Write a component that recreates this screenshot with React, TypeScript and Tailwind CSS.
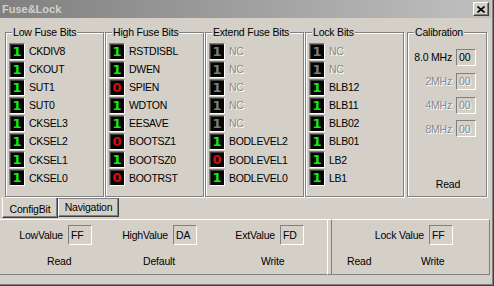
import React from "react";

type Bit = { v: 0 | 1; name: string; dis?: boolean };

const low: Bit[] = [
  { v: 1, name: "CKDIV8" },
  { v: 1, name: "CKOUT" },
  { v: 1, name: "SUT1" },
  { v: 1, name: "SUT0" },
  { v: 1, name: "CKSEL3" },
  { v: 1, name: "CKSEL2" },
  { v: 1, name: "CKSEL1" },
  { v: 1, name: "CKSEL0" },
];
const high: Bit[] = [
  { v: 1, name: "RSTDISBL" },
  { v: 1, name: "DWEN" },
  { v: 0, name: "SPIEN" },
  { v: 1, name: "WDTON" },
  { v: 1, name: "EESAVE" },
  { v: 0, name: "BOOTSZ1" },
  { v: 1, name: "BOOTSZ0" },
  { v: 0, name: "BOOTRST" },
];
const ext: Bit[] = [
  { v: 1, name: "NC", dis: true },
  { v: 1, name: "NC", dis: true },
  { v: 1, name: "NC", dis: true },
  { v: 1, name: "NC", dis: true },
  { v: 1, name: "NC", dis: true },
  { v: 1, name: "BODLEVEL2" },
  { v: 0, name: "BODLEVEL1" },
  { v: 1, name: "BODLEVEL0" },
];
const lock: Bit[] = [
  { v: 1, name: "NC", dis: true },
  { v: 1, name: "NC", dis: true },
  { v: 1, name: "BLB12" },
  { v: 1, name: "BLB11" },
  { v: 1, name: "BLB02" },
  { v: 1, name: "BLB01" },
  { v: 1, name: "LB2" },
  { v: 1, name: "LB1" },
];

function GroupBox({
  title,
  className,
  children,
}: {
  title: string;
  className: string;
  children: React.ReactNode;
}) {
  return (
    <div
      className={`relative border border-[#808080] shadow-[inset_1px_1px_0_#fff,1px_1px_0_#fff] ${className}`}
    >
      <span className="absolute left-[6px] top-[-8px] bg-[#d4d0c8] px-[1px] text-[10.5px] leading-[14px] tracking-[-0.2px] text-black whitespace-nowrap">
        {title}
      </span>
      {children}
    </div>
  );
}

function BitBox({ b }: { b: Bit }) {
  const color = b.dis ? "text-[#7c7c7c]" : b.v === 1 ? "text-[#10f010]" : "text-[#d01010]";
  return (
    <div className="w-[16px] h-[17px] shrink-0 border border-t-[#808080] border-l-[#808080] border-b-white border-r-white bg-[#050505] shadow-[inset_1px_1px_0_#404040] flex items-center justify-center">
      <span
        className={`${color} font-['DejaVu_Sans',sans-serif] font-bold text-[13px] leading-none`}
      >
        {b.v}
      </span>
    </div>
  );
}

function BitGroup({ title, bits }: { title: string; bits: Bit[] }) {
  return (
    <GroupBox title={title} className="w-[99px] h-[165px] shrink-0">
      <div className="flex flex-col pt-[9px] pl-[3px]">
        {bits.map((b, i) => (
          <div key={i} className="flex items-center h-[18.14px]">
            <BitBox b={b} />
            <span
              className={`ml-[4px] text-[10.5px] tracking-[-0.3px] leading-none whitespace-nowrap ${
                b.dis ? "text-[#8a8a8a] [text-shadow:1px_1px_0_#fff]" : "text-black"
              }`}
            >
              {b.name}
            </span>
          </div>
        ))}
      </div>
    </GroupBox>
  );
}

function TextBox({
  value,
  w,
  h,
  dis,
}: {
  value: string;
  w: string;
  h: string;
  dis?: boolean;
}) {
  return (
    <div
      className={`${w} ${h} shrink-0 border border-t-[#808080] border-l-[#808080] border-b-white border-r-white flex items-center pl-[2px] bg-[#d4d0c8]`}
    >
      <span
        className={`text-[10.5px] leading-none tracking-[-0.2px] ${
          dis ? "text-[#8a8a8a] [text-shadow:1px_1px_0_#fff]" : "text-black"
        }`}
      >
        {value}
      </span>
    </div>
  );
}

function CalRow({ label, dis }: { label: string; dis?: boolean }) {
  return (
    <div className="flex items-center h-[17px]">
      <span
        className={`w-[44px] text-right text-[10.5px] leading-none tracking-[-0.2px] whitespace-nowrap ${
          dis ? "text-[#8a8a8a] [text-shadow:1px_1px_0_#fff]" : "text-black"
        }`}
      >
        {label}
      </span>
      <div className="ml-[4px]">
        <TextBox value="00" w="w-[20px]" h="h-[17px]" dis={dis} />
      </div>
    </div>
  );
}

function ValueItem({ label, value, w }: { label: string; value: string; w: string }) {
  return (
    <div className={`${w} flex items-center justify-end gap-[5px]`}>
      <span className="text-[10.5px] leading-none tracking-[-0.2px] whitespace-nowrap">{label}</span>
      <TextBox value={value} w="w-[24px]" h="h-[20px]" />
    </div>
  );
}

export default function App() {
  return (
    <div className="w-[494px] h-[286px] bg-[#d4d0c8] border-r border-b border-[#404040] shadow-[inset_-1px_-1px_0_#808080] overflow-hidden font-['Liberation_Sans',Arial,sans-serif] text-black flex flex-col">
      {/* Title bar */}
      <div className="w-[491px] h-[18px] shrink-0 bg-gradient-to-r from-[#808080] to-[#c0c0c0] flex items-center justify-between pl-[2px] pr-[2px]">
        <span className="text-[11px] font-bold text-[#d4d0c8] leading-none">Fuse&amp;Lock</span>
        <div className="w-[16px] h-[14px] bg-[#d4d0c8] border border-t-white border-l-white border-b-[#404040] border-r-[#404040] shadow-[inset_-1px_-1px_0_#808080] flex items-center justify-center">
          <svg width="8" height="7" viewBox="0 0 8 7">
            <path d="M0.5 0.5 L7.5 6.5 M7.5 0.5 L0.5 6.5" stroke="#000" strokeWidth="1.6" />
          </svg>
        </div>
      </div>

      {/* Groups */}
      <div className="flex mt-[14px] pl-[5px] gap-[1px] h-[165px] shrink-0">
        <BitGroup title="Low Fuse Bits" bits={low} />
        <BitGroup title="High Fuse Bits" bits={high} />
        <BitGroup title="Extend Fuse Bits" bits={ext} />
        <BitGroup title="Lock Bits" bits={lock} />
        <GroupBox title="Calibration" className="ml-[2px] w-[80px] h-[165px] shrink-0 flex flex-col">
          <div className="flex flex-col pt-[16px] gap-[6.8px]">
            <CalRow label="8.0 MHz" />
            <CalRow label="2MHz" dis />
            <CalRow label="4MHz" dis />
            <CalRow label="8MHz" dis />
          </div>
          <div className="mt-auto mb-[5px] text-center text-[10.5px] leading-[14px] tracking-[-0.2px] pl-[2px]">
            Read
          </div>
        </GroupBox>
      </div>

      {/* Tabs */}
      <div className="flex h-[22px] shrink-0 items-start">
        <div className="ml-[2px] w-[56px] h-[21px] border-l border-l-white border-r border-r-[#404040] border-b border-b-[#404040] shadow-[inset_-1px_-1px_0_#808080] flex items-center justify-center pt-[5px]">
          <span className="text-[10.5px] leading-none tracking-[-0.2px]">ConfigBit</span>
        </div>
        <div className="mt-[1px] w-[61px] h-[19px] border border-l-white border-t-[#808080] border-r-[#404040] border-b-[#404040] shadow-[inset_-1px_-1px_0_#808080] flex items-center justify-center">
          <span className="text-[10.5px] leading-none tracking-[-0.2px]">Navigation</span>
        </div>
      </div>

      {/* Lower panel */}
      <div className="flex h-[56px] shrink-0">
        <div className="w-[327px] border-t border-t-white border-b border-b-[#808080] flex flex-col">
          <div className="flex items-center pt-[5px]">
            <ValueItem label="LowValue" value="FF" w="w-[92px]" />
            <ValueItem label="HighValue" value="DA" w="w-[105px]" />
            <ValueItem label="ExtValue" value="FD" w="w-[107px]" />
          </div>
          <div className="flex pl-[47px] mt-[9px] text-[10.5px] leading-[14px] tracking-[-0.2px]">
            <span className="w-[96px]">Read</span>
            <span className="w-[118px]">Default</span>
            <span>Write</span>
          </div>
        </div>
        <div className="w-[5px] border-t border-t-white border-l border-l-white border-r border-r-[#808080] border-b border-b-[#808080]" />
        <div className="w-[158px] border-t border-t-white border-b border-b-[#808080] border-r border-r-[#808080] flex flex-col">
          <div className="flex items-center pt-[5px]">
            <ValueItem label="Lock Value" value="FF" w="w-[121px]" />
          </div>
          <div className="flex pl-[15px] mt-[9px] text-[10.5px] leading-[14px] tracking-[-0.2px]">
            <span className="w-[74px]">Read</span>
            <span>Write</span>
          </div>
        </div>
      </div>
    </div>
  );
}
